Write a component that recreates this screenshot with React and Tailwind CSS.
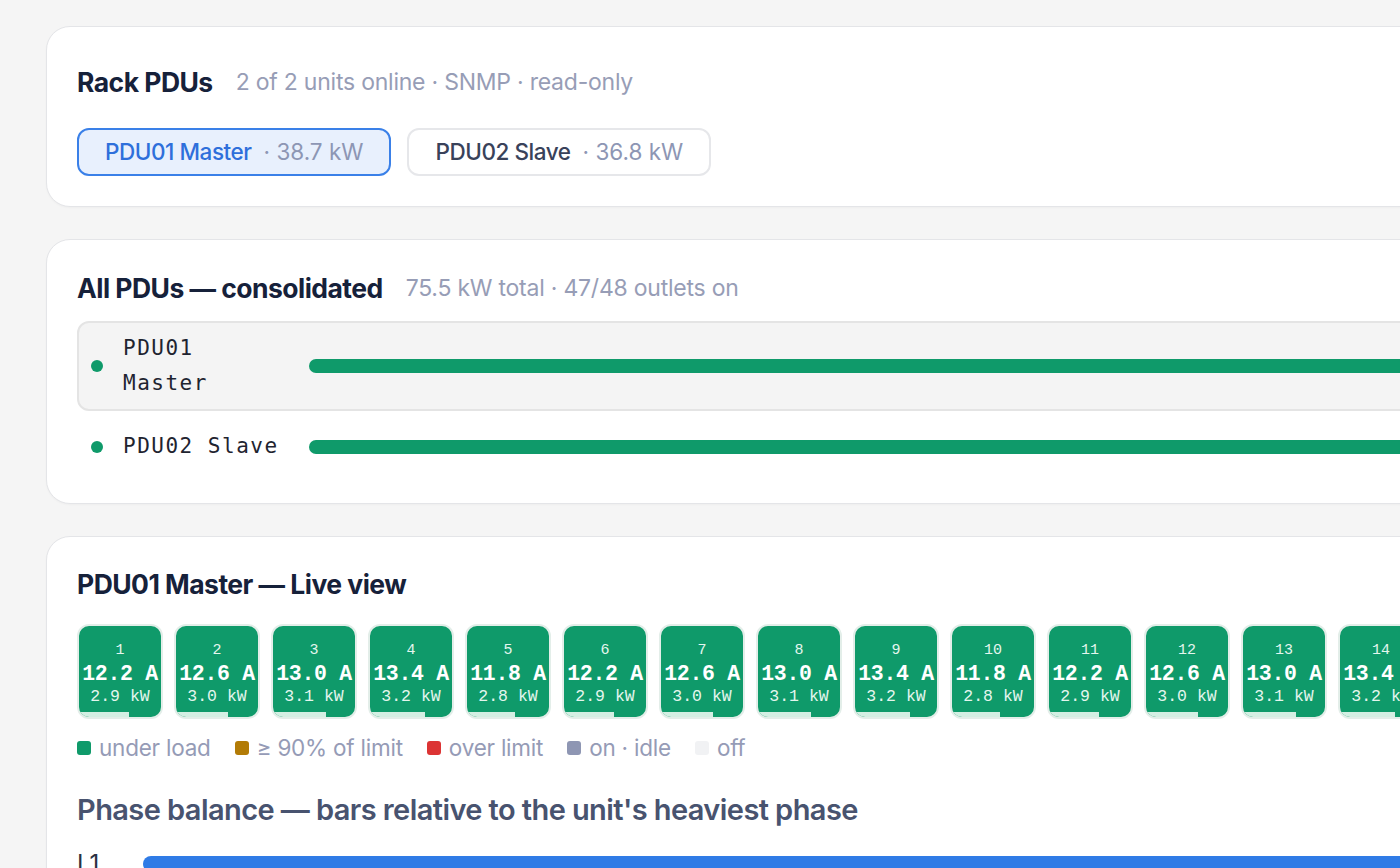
import React from "react";

const sans = { fontFamily: "Inter, 'Noto Sans', sans-serif" };
const mono = { fontFamily: "'Liberation Mono', 'DejaVu Sans Mono', monospace" };
const monoTall = { fontFamily: "'DejaVu Sans Mono', 'Liberation Mono', monospace" };

const AMPS = [12.2, 12.6, 13.0, 13.4, 11.8];
const KW = [2.9, 3.0, 3.1, 3.2, 2.8];
const LIMIT = 20;

const outlets = Array.from({ length: 24 }, (_, i) => ({
  n: i + 1,
  amps: AMPS[i % 5],
  kw: KW[i % 5],
}));

const Card = ({ className = "", children }) => (
  <section
    className={`w-[2400px] shrink-0 rounded-[24px] border border-[#e4e5e8] bg-white px-[30px] shadow-[0_1px_2px_rgba(0,0,0,0.03)] ${className}`}
  >
    {children}
  </section>
);

const CardTitle = ({ title, meta }) => (
  <div className="flex h-8 items-center gap-[23px]">
    <h2 className="text-[26.5px] font-bold leading-8 tracking-[-0.02em] text-[#16213a]">{title}</h2>
    {meta && <span className="text-[23px] leading-8 tracking-[-0.01em] text-[#979db6]">{meta}</span>}
  </div>
);

const Outlet = ({ n, amps, kw }) => (
  <div
    className="relative flex h-[95px] w-[86px] shrink-0 flex-col items-center overflow-hidden rounded-[12px] border-2 border-[#e3eee9] bg-[#0f9a6a] pt-[15px] text-white"
    style={mono}
  >
    <span className="text-[15px] leading-[20px] text-[#e4f6ee]">{n}</span>
    <span className="text-[21.5px] font-bold leading-[26px] tracking-[-0.3px]">{amps.toFixed(1)} A</span>
    <span className="text-[16.5px] leading-[20px] text-[#e4f6ee]">{kw.toFixed(1)} kW</span>
    {/* load bar against the per-outlet limit */}
    <div className="absolute bottom-0 left-0 h-[5px] bg-[#d4efe3]" style={{ width: `${(amps / LIMIT) * 100}%` }} />
  </div>
);

const Legend = ({ color, label }) => (
  <div className="flex items-center gap-2">
    <span className={`h-[14px] w-[14px] rounded-[3px] ${color}`} />
    <span className="text-[22.5px] leading-5 tracking-[-0.01em] text-[#959bb6]">{label}</span>
  </div>
);

export default function App() {
  return (
    <div className="h-[868px] w-[1400px] overflow-hidden bg-[#f5f5f5]" style={sans}>
      <div className="flex flex-col gap-8 pl-[46px] pt-[26px]">
        {/* Unit picker */}
        <Card className="pb-[30px] pt-[39px]">
          <CardTitle title="Rack PDUs" meta="2 of 2 units online · SNMP · read-only" />
          <div className="mt-[30px] flex gap-4">
            <button className="flex h-12 items-center gap-3 rounded-[12px] border-2 border-[#3a80e8] bg-[#e8f0fd] px-[26px] text-[22.5px]">
              <span className="font-medium tracking-[-0.02em] text-[#2e6fdb]">PDU01 Master</span>
              <span className="text-[#8d96b4]">· 38.7 kW</span>
            </button>
            <button className="flex h-12 items-center gap-3 rounded-[12px] border-2 border-[#e6e7ea] bg-white px-[26px] text-[22.5px]">
              <span className="font-medium tracking-[-0.02em] text-[#39425a]">PDU02 Slave</span>
              <span className="text-[#8d96b4]">· 36.8 kW</span>
            </button>
          </div>
        </Card>

        {/* Consolidated load */}
        <Card className="pb-[29px] pt-8">
          <CardTitle title="All PDUs — consolidated" meta="75.5 kW total · 47/48 outlets on" />
          <div className="mt-[17px] flex flex-col gap-[8px]">
            {[
              { name: "PDU01 Master", active: true },
              { name: "PDU02 Slave", active: false },
            ].map((u) => (
              <div
                key={u.name}
                className={`flex items-center gap-5 rounded-[12px] border-2 px-[12px] py-[8px] ${u.active ? "border-[#e4e4e4] bg-[#f4f4f4]" : "border-transparent"}`}
              >
                <span className="h-3 w-3 shrink-0 rounded-full bg-[#0f9a6a]" />
                <span
                  className="w-[160px] shrink-0 text-[21px] leading-[35px] tracking-[1.5px] text-[#1f2430]"
                  style={monoTall}
                >
                  {u.name}
                </span>
                <div className="ml-[6px] h-[14px] flex-1 rounded-full bg-[#0f9a6a]" />
              </div>
            ))}
          </div>
        </Card>

        {/* Live outlet view */}
        <Card className="pb-10 pt-[31px]">
          <CardTitle title="PDU01 Master — Live view" />
          <div className="mt-[24px] flex gap-[11px]">
            {outlets.map((o) => (
              <Outlet key={o.n} {...o} />
            ))}
          </div>
          <div className="mt-[19px] flex h-5 items-center gap-6">
            <Legend color="bg-[#0f9a6a]" label="under load" />
            <Legend color="bg-[#b27b06]" label="≥ 90% of limit" />
            <Legend color="bg-[#dc3434]" label="over limit" />
            <Legend color="bg-[#8e96b3]" label="on · idle" />
            <Legend color="bg-[#f1f2f4]" label="off" />
          </div>
          <h3 className="mt-[34px] text-[29px] font-semibold leading-9 tracking-[-0.02em] text-[#48536f]">
            Phase balance — bars relative to the unit's heaviest phase
          </h3>
          <div className="mt-[24px] flex items-center gap-[42px]">
            <span className="w-6 text-[24px] leading-6 text-[#2a3142]">L1</span>
            <div className="h-[16px] flex-1 rounded-full bg-[#2f7be6]" />
          </div>
        </Card>
      </div>
    </div>
  );
}
